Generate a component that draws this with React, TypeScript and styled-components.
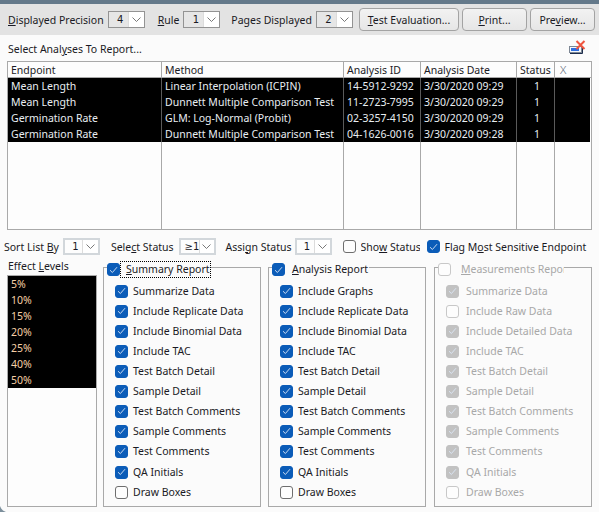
import React from "react";
import { createGlobalStyle, styled } from "styled-components";

const Global = createGlobalStyle`
  html, body {
    margin: 0;
    padding: 0;
    background: #fbfbfb;
  }
  * {
    box-sizing: border-box;
  }
`;

const Page = styled.div`
  position: relative;
  width: 599px;
  height: 512px;
  overflow: hidden;
  display: flex;
  flex-direction: column;
  font-family: "Noto Sans", "Liberation Sans", sans-serif;
  font-size: 10.5px;
  color: #1a1a24;
  background: #fbfbfb;
`;

const TitleStrip = styled.div`
  height: 4px;
  flex: none;
  background: #64798a;
`;

const Toolbar = styled.div`
  height: 31px;
  flex: none;
  display: flex;
  align-items: center;
  padding: 0 4px 0 8px;
  background: #e3e3e3;
`;

const Label = styled.span<{ $left?: number }>`
  margin-left: ${(p) => p.$left ?? 0}px;
  white-space: nowrap;
`;

const Key = styled.span`
  text-decoration: underline;
`;

const Spin = styled.div<{ $left: number; $light?: boolean }>`
  width: 37px;
  height: 17px;
  margin-left: ${(p) => p.$left}px;
  flex: none;
  display: flex;
  border: ${(p) => (p.$light ? "2px solid #d2d7db" : "1px solid #939393")};
  background: ${(p) => (p.$light ? "#fdfdfd" : "#e6e6e6")};
`;

const SpinValue = styled.div`
  flex: 1;
  display: flex;
  align-items: center;
  justify-content: center;
  padding-left: 4px;
  font-family: "DejaVu Sans", sans-serif;
  font-size: 10px;
`;

const SpinArrow = styled.div`
  width: 16px;
  display: flex;
  align-items: center;
  justify-content: center;
  background: #fff;
  border-left: 1px solid #dcdcdc;
  color: #6a6a6a;
`;

const Button = styled.div<{ $width: number; $first?: boolean }>`
  width: ${(p) => p.$width}px;
  height: 23px;
  margin-left: ${(p) => (p.$first ? "auto" : "3px")};
  flex: none;
  display: flex;
  align-items: center;
  justify-content: center;
  border: 1px solid #a3a3a3;
  border-radius: 4px;
  background: linear-gradient(#f2f2f2, #e6e6e6);
`;

const Heading = styled.div`
  height: 26px;
  flex: none;
  display: flex;
  align-items: flex-start;
  justify-content: space-between;
  padding: 5px 13px 0 8px;
  line-height: 14px;
`;

const HeadingText = styled.span`
  margin-top: 2px;
`;

const Table = styled.div`
  height: 169px;
  margin-left: 7px;
  width: 585px;
  flex: none;
  display: grid;
  grid-template-columns: 154px 182px 77px 96px 38px 1fr;
  grid-template-rows: 16px 64px 1fr;
  border: 1px solid #a9a9a9;
  background: #fdfdfd;
`;

const HeadCell = styled.div<{ $mark?: boolean }>`
  display: flex;
  align-items: center;
  padding-left: ${(p) => (p.$mark ? 5 : 3)}px;
  border-right: 1px solid #a9a9a9;
  border-bottom: 1px solid #a9a9a9;
  color: ${(p) => (p.$mark ? "#5b6775" : "#1a1a24")};
  font-size: ${(p) => (p.$mark ? 11.5 : 10.5)}px;
  font-weight: ${(p) => (p.$mark ? 300 : 400)};
  &:nth-child(6) {
    border-right: none;
  }
`;

const DataColumn = styled.div<{ $center?: boolean }>`
  display: flex;
  flex-direction: column;
  background: #000;
  color: #e9eef2;
  border-right: 1px solid #5a5a5a;
  text-align: ${(p) => (p.$center ? "center" : "left")};
  &:nth-child(12) {
    margin-right: 1px;
    border-right: none;
  }
`;

const DataCell = styled.div`
  height: 16px;
  line-height: 16px;
  padding-left: 3px;
  white-space: nowrap;
`;

const EmptyColumn = styled.div`
  border-right: 1px solid #a9a9a9;
  &:last-child {
    border-right: none;
  }
`;

const FilterRow = styled.div`
  height: 17px;
  margin-top: 8px;
  flex: none;
  display: flex;
  align-items: center;
  padding-left: 4px;
`;

const Clip = styled.div`
  width: 59px;
  margin-left: 5px;
  overflow: hidden;
  white-space: nowrap;
`;

const Panels = styled.div`
  margin-top: 6px;
  height: 246px;
  flex: none;
  display: flex;
  align-items: flex-start;
  padding-left: 7px;
`;

const EffectColumn = styled.div`
  width: 90px;
  height: 246px;
  flex: none;
  display: flex;
  flex-direction: column;
`;

const EffectTitle = styled.div`
  height: 13px;
  line-height: 11px;
  padding-left: 1px;
  white-space: nowrap;
`;

const EffectList = styled.div`
  flex: 1;
  margin-top: 1px;
  border: 1px solid #a9a9a9;
  background: #fdfdfd;
`;

const EffectItems = styled.div`
  background: #000;
  color: #f5cfa6;
`;

const EffectItem = styled.div`
  height: 16px;
  line-height: 16px;
  padding-left: 3px;
`;

const Group = styled.div<{ $left: number }>`
  position: relative;
  width: 158px;
  height: 240px;
  margin-top: 6px;
  margin-left: ${(p) => p.$left}px;
  flex: none;
  padding: 13px 0 0 11px;
  border: 1px solid #a9a9a9;
`;

const Legend = styled.div`
  position: absolute;
  top: -7px;
  left: 3px;
  display: flex;
  align-items: center;
  height: 17px;
  background: #fbfbfb;
`;

const LegendText = styled.div<{ $focus?: boolean; $dim?: boolean; $pad: number; $width?: number }>`
  height: 17px;
  line-height: 17px;
  padding-left: ${(p) => p.$pad}px;
  padding-right: 1px;
  white-space: nowrap;
  overflow: hidden;
  width: ${(p) => (p.$width ? `${p.$width}px` : "auto")};
  outline: ${(p) => (p.$focus ? "1px dotted #000" : "none")};
  outline-offset: -1px;
  color: ${(p) => (p.$dim ? "#a8a8a8" : "#1a1a24")};
`;

const Row = styled.div<{ $gap?: number }>`
  height: 20px;
  margin-top: ${(p) => p.$gap ?? 0}px;
  display: flex;
  align-items: center;
  white-space: nowrap;
`;

const RowText = styled.span<{ $dim?: boolean }>`
  margin-left: ${(p) => (p.$dim ? 7 : 5)}px;
  color: ${(p) => (p.$dim ? "#a8a8a8" : "#1a1a24")};
`;

const Box = styled.div<{ $on?: boolean; $off?: boolean; $left?: number }>`
  width: 13px;
  height: 13px;
  margin-left: ${(p) => p.$left ?? 0}px;
  flex: none;
  display: flex;
  align-items: center;
  justify-content: center;
  border-radius: 3px;
  border: 1px solid
    ${(p) => (p.$on ? (p.$off ? "#c2c2c2" : "#0b5cb8") : p.$off ? "#c8c8c8" : "#6e6e6e")};
  background: ${(p) => (p.$on ? (p.$off ? "#c2c2c2" : "#0b5cb8") : "#fdfdfd")};
`;

const CornerMark = styled.svg`
  position: absolute;
  left: 0;
  bottom: 0;
`;

const Chevron = () => (
  <svg width="9" height="5" viewBox="0 0 9 5" fill="none">
    <path d="M0.5 0.5 L4.5 4.5 L8.5 0.5" stroke="currentColor" strokeWidth="0.9" />
  </svg>
);

const Tick = () => (
  <svg width="9" height="8" viewBox="0 0 9 8" fill="none">
    <path d="M1 4.2 L3.4 6.5 L8 1.2" stroke="#dbe7f6" strokeWidth="0.9" />
  </svg>
);

const Check = ({ on, off, left }: { on?: boolean; off?: boolean; left?: number }) => (
  <Box $on={on} $off={off} $left={left}>
    {on && <Tick />}
  </Box>
);

const Number = ({ value, left, light }: { value: string; left: number; light?: boolean }) => (
  <Spin $left={left} $light={light}>
    <SpinValue>{value}</SpinValue>
    <SpinArrow>
      <Chevron />
    </SpinArrow>
  </Spin>
);

const ClearIcon = () => (
  <svg width="17" height="14" viewBox="0 0 17 14" fill="none">
    <rect x="0.5" y="6.5" width="12" height="6" fill="#f4f7fb" stroke="#7d8794" />
    <rect x="2" y="8" width="8" height="3" fill="#2f6fe0" />
    <path d="M13.5 6 V13.5 H1" stroke="#1c2c4c" strokeWidth="1" />
    <path d="M7.5 1 L15.5 9 M15.5 1 L7.5 9" stroke="#f0553f" strokeWidth="2" />
  </svg>
);

const columns: { rows: string[]; center?: boolean }[] = [
  { rows: ["Mean Length", "Mean Length", "Germination Rate", "Germination Rate"] },
  {
    rows: [
      "Linear Interpolation (ICPIN)",
      "Dunnett Multiple Comparison Test",
      "GLM: Log-Normal (Probit)",
      "Dunnett Multiple Comparison Test",
    ],
  },
  { rows: ["14-5912-9292", "11-2723-7995", "02-3257-4150", "04-1626-0016"] },
  { rows: ["3/30/2020 09:29", "3/30/2020 09:29", "3/30/2020 09:29", "3/30/2020 09:28"] },
  { rows: ["1", "1", "1", "1"], center: true },
  { rows: ["", "", "", ""] },
];

const headers = ["Endpoint", "Method", "Analysis ID", "Analysis Date", "Status", "X"];

const tail = ["Test Batch Detail", "Sample Detail", "Test Batch Comments", "Sample Comments", "Test Comments", "QA Initials"];

const summaryRows = ["Summarize Data", "Include Replicate Data", "Include Binomial Data", "Include TAC", ...tail];
const analysisRows = ["Include Graphs", "Include Replicate Data", "Include Binomial Data", "Include TAC", ...tail];
const measureRows = ["Summarize Data", "Include Raw Data", "Include Detailed Data", "Include TAC", ...tail];

const CheckList = ({ rows, dim }: { rows: string[]; dim?: boolean }) => (
  <>
    {rows.map((text, i) => (
      <Row key={text} $gap={i === 9 ? 1 : 0}>
        <Check on={!(dim && i === 1)} off={dim} />
        <RowText $dim={dim}>{text}</RowText>
      </Row>
    ))}
    <Row>
      <Check off={dim} />
      <RowText $dim={dim}>Draw Boxes</RowText>
    </Row>
  </>
);

export default function App() {
  return (
    <Page>
      <Global />
      <TitleStrip />
      <Toolbar>
        <Label><Key>D</Key>isplayed Precision</Label>
        <Number value="4" left={4} />
        <Label $left={13}><Key>R</Key>ule</Label>
        <Number value="1" left={4} />
        <Label $left={11}>Pages Displayed</Label>
        <Number value="2" left={4} />
        <Button $width={100} $first><span><Key>T</Key>est Evaluation...</span></Button>
        <Button $width={65}><span><Key>P</Key>rint...</span></Button>
        <Button $width={65}><span>Pre<Key>v</Key>iew...</span></Button>
      </Toolbar>
      <Heading>
        <HeadingText>Select Anal<Key>y</Key>ses To Report...</HeadingText>
        <ClearIcon />
      </Heading>
      <Table>
        {headers.map((h) => (
          <HeadCell key={h} $mark={h === "X"}>{h}</HeadCell>
        ))}
        {columns.map((col, i) => (
          <DataColumn key={i} $center={col.center}>
            {col.rows.map((r, j) => (
              <DataCell key={j}>{r}</DataCell>
            ))}
          </DataColumn>
        ))}
        {headers.map((h) => (
          <EmptyColumn key={h} />
        ))}
      </Table>
      <FilterRow>
        <Label>Sort List <Key>B</Key>y</Label>
        <Number value="1" left={4} light />
        <Label $left={11}>Sele<Key>c</Key>t Status</Label>
        <Number value="≥1" left={5} light />
        <Label $left={10}>Assi<Key>g</Key>n Status</Label>
        <Number value="1" left={3} light />
        <Check left={11} />
        <Clip>Sho<Key>w</Key> Status</Clip>
        <Check on left={7} />
        <Label $left={5}>Flag M<Key>o</Key>st Sensitive Endpoint</Label>
      </FilterRow>
      <Panels>
        <EffectColumn>
          <EffectTitle>Effect <Key>L</Key>evels</EffectTitle>
          <EffectList>
            <EffectItems>
              {["5%", "10%", "15%", "20%", "25%", "40%", "50%"].map((v) => (
                <EffectItem key={v}>{v}</EffectItem>
              ))}
            </EffectItems>
          </EffectList>
        </EffectColumn>
        <Group $left={6}>
          <Legend>
            <Check on />
            <LegendText $focus $pad={6}><Key>S</Key>ummary Report</LegendText>
          </Legend>
          <CheckList rows={summaryRows} />
        </Group>
        <Group $left={7}>
          <Legend>
            <Check on />
            <LegendText $pad={7}><Key>A</Key>nalysis Report</LegendText>
          </Legend>
          <CheckList rows={analysisRows} />
        </Group>
        <Group $left={8}>
          <Legend>
            <Check off />
            <LegendText $dim $pad={10} $width={113}><Key>M</Key>easurements Report</LegendText>
          </Legend>
          <CheckList rows={measureRows} dim />
        </Group>
      </Panels>
      <CornerMark width="7" height="6" viewBox="0 0 7 6">
        <path d="M0 0 C1 3 3 5 6 6 H0 Z" fill="#7c8f9c" />
      </CornerMark>
    </Page>
  );
}
